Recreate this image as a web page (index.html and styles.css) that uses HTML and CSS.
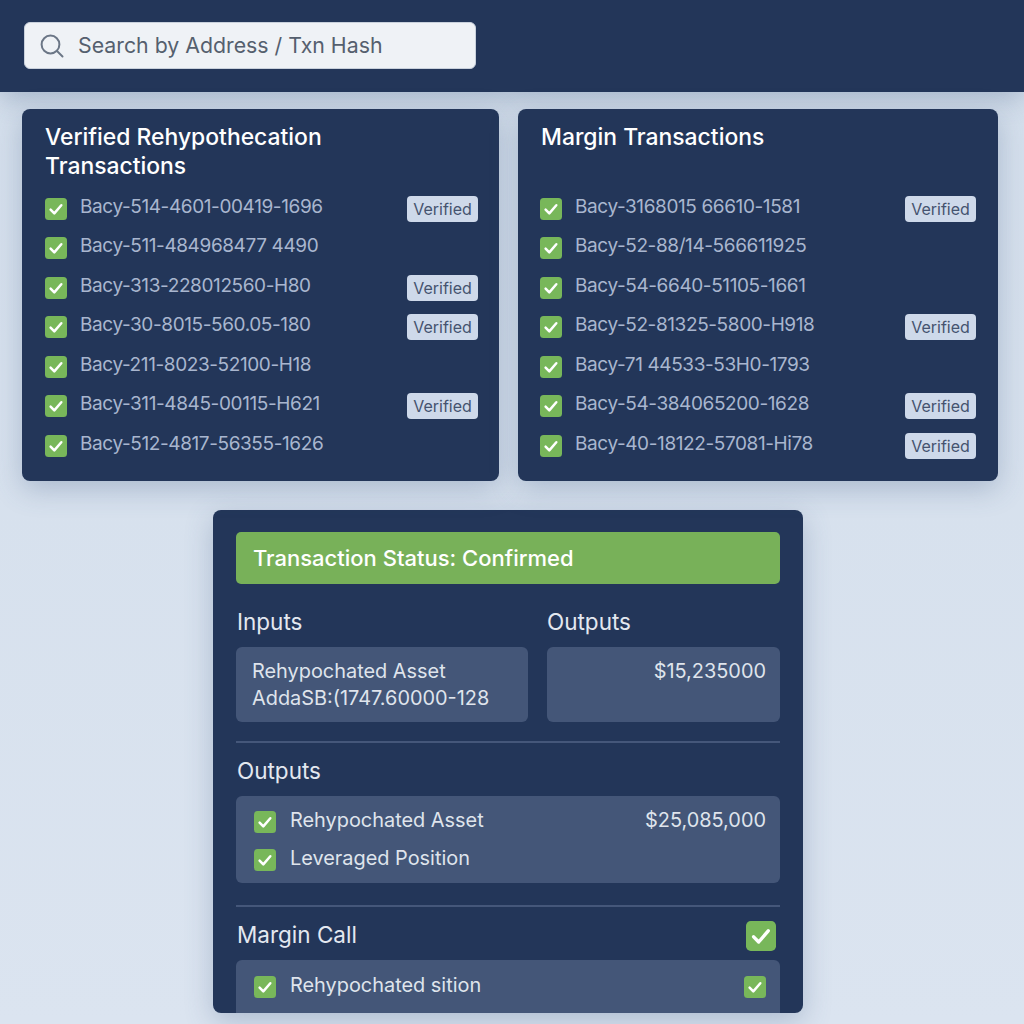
FILE: index.html
```html
<!DOCTYPE html>
<html lang="en">
<head>
    <meta charset="UTF-8">
    <meta name="viewport" content="width=device-width, initial-scale=1.0">
    <title>Rehypothecation Explorer</title>
    <link rel="stylesheet" href="styles.css">
</head>
<body>
    <svg class="defs" width="0" height="0">
        <symbol id="check" viewBox="0 0 22 22">
            <rect width="22" height="22" rx="3.5" fill="#78b75a"/>
            <path d="M5.6 11.6l3.7 3.8 7-8.2" fill="none" stroke="#fff" stroke-width="2.5" stroke-linecap="round" stroke-linejoin="round"/>
        </symbol>
    </svg>

    <!-- Search bar -->
    <header class="topbar">
        <div class="search">
            <svg class="search-icon" width="26" height="26" viewBox="0 0 26 26">
                <circle cx="11.5" cy="11.5" r="8.9" fill="none" stroke="#6b7686" stroke-width="2"/>
                <path d="M18 18l5.5 5.5" fill="none" stroke="#6b7686" stroke-width="2" stroke-linecap="round"/>
            </svg>
            <span class="search-text">Search by Address / Txn Hash</span>
        </div>
    </header>

    <!-- Transaction lists -->
    <section class="cards">
        <div class="card">
            <h2>Verified Rehypothecation Transactions</h2>
            <ul class="tx-list">
                <li><svg class="check"><use href="#check"/></svg><span class="hash">Bacy-514-4601-00419-1696</span><span class="badge">Verified</span></li>
                <li><svg class="check"><use href="#check"/></svg><span class="hash">Bacy-511-484968477 4490</span></li>
                <li><svg class="check"><use href="#check"/></svg><span class="hash">Bacy-313-228012560-H80</span><span class="badge">Verified</span></li>
                <li><svg class="check"><use href="#check"/></svg><span class="hash">Bacy-30-8015-560.05-180</span><span class="badge">Verified</span></li>
                <li><svg class="check"><use href="#check"/></svg><span class="hash">Bacy-211-8023-52100-H18</span></li>
                <li><svg class="check"><use href="#check"/></svg><span class="hash">Bacy-311-4845-00115-H621</span><span class="badge">Verified</span></li>
                <li><svg class="check"><use href="#check"/></svg><span class="hash">Bacy-512-4817-56355-1626</span></li>
            </ul>
        </div>
        <div class="card card-right">
            <h2>Margin Transactions</h2>
            <ul class="tx-list">
                <li><svg class="check"><use href="#check"/></svg><span class="hash">Bacy-3168015 66610-1581</span><span class="badge">Verified</span></li>
                <li><svg class="check"><use href="#check"/></svg><span class="hash">Bacy-52-88/14-566611925</span></li>
                <li><svg class="check"><use href="#check"/></svg><span class="hash">Bacy-54-6640-51105-1661</span></li>
                <li><svg class="check"><use href="#check"/></svg><span class="hash">Bacy-52-81325-5800-H918</span><span class="badge">Verified</span></li>
                <li><svg class="check"><use href="#check"/></svg><span class="hash">Bacy-71 44533-53H0-1793</span></li>
                <li><svg class="check"><use href="#check"/></svg><span class="hash">Bacy-54-384065200-1628</span><span class="badge">Verified</span></li>
                <li><svg class="check"><use href="#check"/></svg><span class="hash">Bacy-40-18122-57081-Hi78</span><span class="badge">Verified</span></li>
            </ul>
        </div>
    </section>

    <!-- Transaction detail -->
    <section class="panel">
        <div class="status">Transaction Status: Confirmed</div>

        <div class="io">
            <div>
                <h3>Inputs</h3>
                <div class="box box-io">Rehypochated Asset<br>AddaSB:(1747.60000-128</div>
            </div>
            <div class="io-right">
                <h3>Outputs</h3>
                <div class="box box-io box-amount">$15,235000</div>
            </div>
        </div>

        <hr>

        <h3>Outputs</h3>
        <div class="box box-rows">
            <div class="row"><svg class="check"><use href="#check"/></svg><span>Rehypochated Asset</span><span class="amount">$25,085,000</span></div>
            <div class="row"><svg class="check"><use href="#check"/></svg><span>Leveraged Position</span></div>
        </div>

        <hr class="hr-low">

        <div class="margin-head">
            <h3>Margin Call</h3>
            <svg class="check check-lg"><use href="#check"/></svg>
        </div>
        <div class="box box-rows">
            <div class="row"><svg class="check"><use href="#check"/></svg><span>Rehypochated sition</span><svg class="check check-end"><use href="#check"/></svg></div>
        </div>
    </section>
</body>
</html>
```

FILE: styles.css
```css
* {
    box-sizing: border-box;
}

body {
    margin: 0;
    height: 1024px;
    overflow: hidden;
    font-family: Inter, "Liberation Sans", sans-serif;
    background: linear-gradient(#d3deeb, #dbe4f0);
    color: #e3e8f0;
}

.defs {
    display: block;
    height: 0;
}

.topbar {
    height: 92px;
    padding: 22px 24px 0;
    background: #233659;
    box-shadow: 0 6px 24px rgba(60, 85, 125, 0.3);
}

.search {
    width: 452px;
    height: 47px;
    padding-left: 14px;
    display: flex;
    align-items: center;
    gap: 13px;
    background: #eff2f6;
    border: 1px solid #c9d1dc;
    border-radius: 6px;
    font-size: 21.3px;
    color: #555f6e;
}

.search-text {
    margin-top: -2px;
}

.cards {
    display: grid;
    grid-template-columns: 477px 480px;
    gap: 19px;
    padding: 17px 0 0 22px;
}

.card {
    height: 372px;
    padding: 14px 21px 0 23px;
    background: #233659;
    border-radius: 8px;
    box-shadow: 0 8px 28px rgba(70, 95, 135, 0.3);
}

.card-right {
    padding-right: 22px;
}

.card h2 {
    margin: 0;
    height: 58px;
    max-width: 320px;
    font-size: 22.9px;
    font-weight: 500;
    line-height: 29px;
    color: #fff;
}

.tx-list {
    list-style: none;
    margin: 8px 0 0;
    padding: 0;
}

.card-right .tx-list {
    margin-left: -1px;
}

.tx-list li {
    height: 39.5px;
    display: flex;
    align-items: center;
}

.check {
    flex: none;
    width: 22px;
    height: 22px;
}

.hash {
    margin: -5px 0 0 13px;
    font-size: 19px;
    letter-spacing: -0.4px;
    color: #a9b6cf;
    white-space: nowrap;
}

.badge {
    margin-left: auto;
    width: 71px;
    height: 26px;
    line-height: 27px;
    text-align: center;
    background: #ced9ea;
    border-radius: 4px;
    font-size: 16px;
    color: #45536f;
}

.panel {
    width: 590px;
    height: 503px;
    margin: 29px 0 0 213px;
    padding: 22px 23px 0;
    overflow: hidden;
    background: #233659;
    border-radius: 8px;
    box-shadow: 0 8px 28px rgba(70, 95, 135, 0.3);
}

.status {
    height: 52px;
    padding-left: 17px;
    line-height: 52px;
    background: #78b159;
    border-radius: 5px;
    font-size: 22px;
    font-weight: 500;
    color: #fff;
}

.panel h3 {
    margin: 0;
    padding-left: 1px;
    font-size: 22.5px;
    font-weight: 400;
    line-height: 26px;
    color: #e3e8f0;
}

.panel .io-right h3 {
    padding-left: 0;
}

.io {
    display: grid;
    grid-template-columns: 292px 233px;
    gap: 19px;
    margin-top: 25px;
}

.box {
    margin-top: 12px;
    background: #445678;
    border-radius: 6px;
    font-size: 19.9px;
    color: #dfe4ec;
}

.box-io {
    height: 75px;
    padding: 11px 16px 0;
    line-height: 27px;
}

.box-amount {
    padding-right: 14px;
    text-align: right;
}

.panel hr {
    margin: 19px 0 15px;
    height: 2px;
    border: 0;
    background: #45577a;
}

.panel hr.hr-low {
    margin: 22px 0 0;
}

.box-rows {
    height: 87px;
    padding: 7px 14px 0 18px;
}

.row {
    height: 38px;
    display: flex;
    align-items: center;
    gap: 14px;
}

.row span {
    margin-top: -4px;
}

.amount,
.check-end {
    margin-left: auto;
}

.margin-head {
    display: flex;
    align-items: center;
    justify-content: space-between;
    padding: 14px 4px 0 0;
}

.margin-head h3 {
    margin-top: -2px;
}

.check-lg {
    width: 30px;
    height: 30px;
}

.margin-head + .box {
    margin-top: 9px;
    padding-top: 8px;
}
```
